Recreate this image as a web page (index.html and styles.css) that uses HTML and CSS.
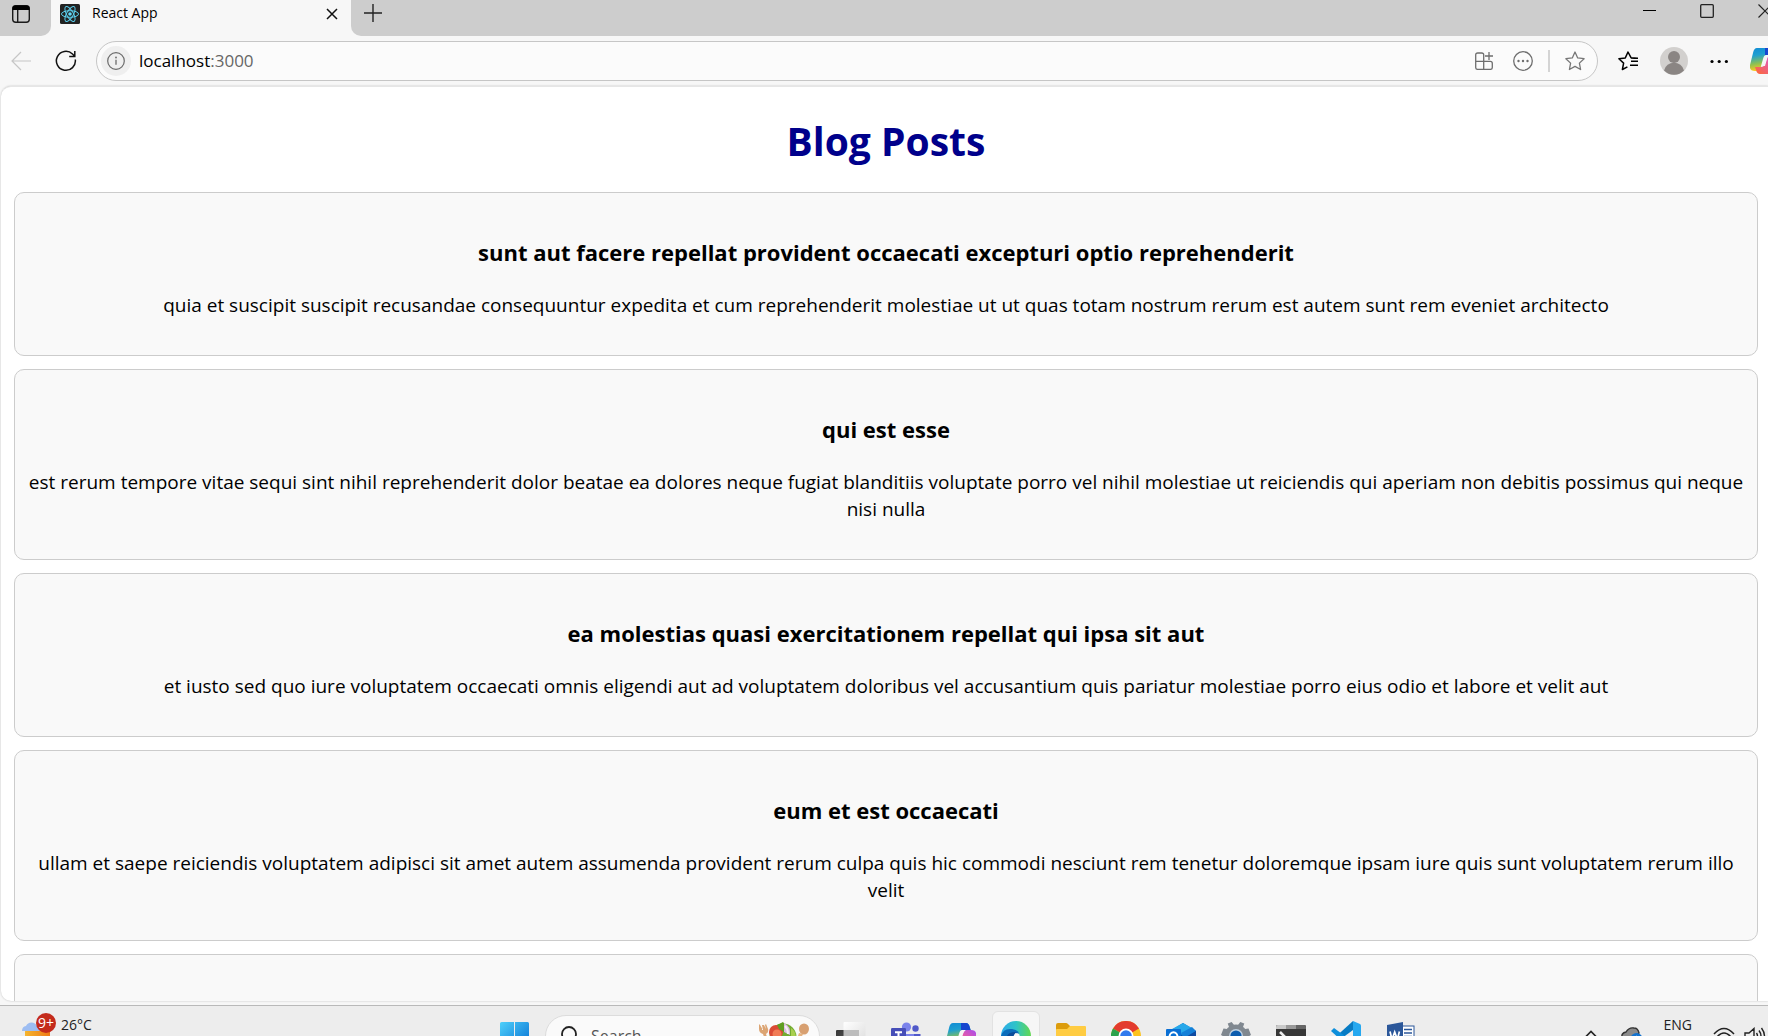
FILE: index.html
```html
<!DOCTYPE html>
<html lang="en">
<head>
<meta charset="utf-8">
<title>React App</title>
<link rel="stylesheet" href="styles.css">
</head>
<body>
<header class="tabs">
  <button class="tab-menu" aria-label="Tab actions">
    <svg width="20" height="20" viewBox="0 0 20 20"><rect x="1.7" y="1.7" width="16.6" height="16.6" rx="3" fill="none" stroke="#1b1b1b" stroke-width="1.4"/><path d="M1.5 6V4.500a3 3 0 0 1 3-3h11a3 3 0 0 1 3 3V6z"/><path d="M6.700 6v12" stroke="#1b1b1b" stroke-width="1.400"/></svg>
  </button>
  <div class="tab">
    <svg width="20" height="20" viewBox="0 0 20 20"><rect width="20" height="20" rx="1.500" fill="#222"/><g fill="none" stroke="#5ccfee" stroke-width="1"><ellipse cx="10" cy="10" rx="8.500" ry="3.300"/><ellipse cx="10" cy="10" rx="8.500" ry="3.300" transform="rotate(60 10 10)"/><ellipse cx="10" cy="10" rx="8.500" ry="3.300" transform="rotate(120 10 10)"/></g><circle cx="10" cy="10" r="1.800" fill="#61dafb"/></svg>
    <span class="tab-title">React App</span>
    <button aria-label="Close tab"><svg width="12" height="12" viewBox="0 0 12 12"><path d="M1 1l10 10M11 1L1 11" stroke="#111" stroke-width="1.500"/></svg></button>
  </div>
  <div class="tab-rest">
    <button aria-label="New tab"><svg width="18" height="18" viewBox="0 0 18 18"><path d="M9 0v18M0 9h18" stroke="#222" stroke-width="1.400"/></svg></button>
    <div class="window-buttons">
      <button aria-label="Minimize"><svg width="14" height="14" viewBox="0 0 14 14"><path d="M1 6.500h13" stroke="#000" stroke-width="1"/></svg></button>
      <button aria-label="Maximize"><svg width="14" height="14" viewBox="0 0 14 14"><rect x=".7" y=".7" width="12.600" height="12.600" rx="1" fill="none" stroke="#222" stroke-width="1.300"/></svg></button>
      <button aria-label="Close window"><svg width="14" height="14" viewBox="0 0 14 14"><path d="M.5 .5l13 13M13.500 .5l-13 13" stroke="#222" stroke-width="1.200"/></svg></button>
    </div>
  </div>
</header>

<nav class="toolbar">
  <button aria-label="Back"><svg width="20" height="20" viewBox="0 0 20 20"><path d="M20 10H1M10 1l-9 9 9 9" fill="none" stroke="#c6c6c6" stroke-width="1.200"/></svg></button>
  <button aria-label="Reload"><svg width="22" height="22" viewBox="0 0 22 22"><path d="M20.300 9.500A9.500 9.500 0 1 1 17.500 4L19.700 6.200M19.800 1v5.600h-5.600" fill="none" stroke="#111" stroke-width="1.500"/></svg></button>
  <div class="address">
    <button class="site-info" aria-label="Site information"><svg width="18" height="18" viewBox="0 0 18 18"><circle cx="9" cy="9" r="8.300" fill="none" stroke="#6b6b6b" stroke-width="1.200"/><path d="M9 7.800v5" stroke="#6b6b6b" stroke-width="1.300"/><circle cx="9" cy="5.500" r=".9" fill="#6b6b6b"/></svg></button>
    <a class="url" href="#">localhost<span>:3000</span></a>
    <button aria-label="App available"><svg width="18" height="18" viewBox="0 0 18 18"><path d="M8.700 17.400V3q0-2-2-2h-4q-2 0-2 2v12.400q0 2 2 2h12.600q2 0 2-2v-4q0-2-2-2H.7M14 0v8M10 4h8" fill="none" stroke="#6e6e6e" stroke-width="1.300"/></svg></button>
    <button aria-label="More page actions"><svg width="20" height="20" viewBox="0 0 20 20"><circle cx="10" cy="10" r="9.300" fill="none" stroke="#6e6e6e" stroke-width="1.300"/><g fill="#6e6e6e"><circle cx="5.500" cy="10" r="1.200"/><circle cx="10" cy="10" r="1.200"/><circle cx="14.500" cy="10" r="1.200"/></g></svg></button>
    <span class="divider"></span>
    <button aria-label="Add to favorites"><svg width="20" height="20" viewBox="0 0 20 20"><path d="M10 1l2.700 5.900 6.400.8-4.700 4.400 1.200 6.400L10 15.400l-5.600 3.100 1.200-6.400L.9 7.700l6.400-.8z" fill="none" stroke="#777" stroke-width="1.300" stroke-linejoin="round"/></svg></button>
  </div>
  <div class="tools">
    <button aria-label="Favorites"><svg width="20" height="20" viewBox="0 0 20 20"><path d="M19.500 7.200l-6.500-.5L10 1 7.300 6.900.9 7.700l4.700 4.400-1.200 6.400 5-2.700M13 10.200h7M12 14.200h8M13 7.200h7" fill="none" stroke="#000" stroke-width="1.500" stroke-linejoin="round"/></svg></button>
    <button aria-label="Profile"><svg width="28" height="28" viewBox="0 0 28 28"><circle cx="14" cy="14" r="14" fill="#d2d0ce"/><circle cx="14" cy="10" r="6" fill="#8a8583"/><path d="M4 23.500a10.300 10.300 0 0 1 20 0A14 14 0 0 1 4 23.500z" fill="#8a8583"/></svg></button>
    <button aria-label="Settings and more"><svg width="18" height="18" viewBox="0 0 18 18"><circle cx="2" cy="9.500" r="1.600"/><circle cx="9.200" cy="9.500" r="1.600"/><circle cx="16.400" cy="9.500" r="1.600"/></svg></button>
    <button aria-label="Copilot"><svg width="30" height="28" viewBox="0 0 30 28"><use href="#copilot"/></svg></button>
  </div>
</nav>

<main class="page">
  <h1>Blog Posts</h1>
  <article class="post"><h3>sunt aut facere repellat provident occaecati excepturi optio reprehenderit</h3><p>quia et suscipit suscipit recusandae consequuntur expedita et cum reprehenderit molestiae ut ut quas totam nostrum rerum est autem sunt rem eveniet architecto</p></article>
  <article class="post"><h3>qui est esse</h3><p>est rerum tempore vitae sequi sint nihil reprehenderit dolor beatae ea dolores neque fugiat blanditiis voluptate porro vel nihil molestiae ut reiciendis qui aperiam non debitis possimus qui neque nisi nulla</p></article>
  <article class="post"><h3>ea molestias quasi exercitationem repellat qui ipsa sit aut</h3><p>et iusto sed quo iure voluptatem occaecati omnis eligendi aut ad voluptatem doloribus vel accusantium quis pariatur molestiae porro eius odio et labore et velit aut</p></article>
  <article class="post"><h3>eum et est occaecati</h3><p>ullam et saepe reiciendis voluptatem adipisci sit amet autem assumenda provident rerum culpa quis hic commodi nesciunt rem tenetur doloremque ipsam iure quis sunt voluptatem rerum illo velit</p></article>
  <article class="post post-next"></article>
</main>

<footer class="taskbar">
  <div class="taskbar-row">
    <div class="weather">
      <div class="weather-icon">
        <svg width="30" height="30" viewBox="0 0 30 30"><defs><linearGradient id="sun" x2="1"><stop stop-color="#f5b52e"/><stop offset="1" stop-color="#ee7a16"/></linearGradient></defs><rect x="3" y="9" width="25" height="20" rx="4" fill="url(#sun)"/><path d="M0 12a5 5 0 0 1 4-5 6 6 0 0 1 11 0q4 1 4 5H0z" fill="#9dbdf2"/><path d="M14 22q2-6 6-5 5 0 6 5z" fill="#85a8e6"/></svg>
        <span class="badge">9+</span>
      </div>
      <span class="label">26°C</span>
    </div>
    <div class="apps">
      <button class="start" aria-label="Start"><svg width="30" height="30" viewBox="0 0 30 30"><defs><linearGradient id="win" gradientUnits="userSpaceOnUse" x1="0" y1="0" x2="30" y2="30"><stop stop-color="#4fd2fb"/><stop offset="1" stop-color="#0067cf"/></linearGradient></defs><path d="M1.500 1H14v14H0V2.500Q0 1 1.500 1zM15 1h12.500Q29 1 29 2.500V15H15zM0 16h14v14H0zM15 16h14v14H15z" fill="url(#win)"/></svg></button>
      <div class="search">
        <svg width="18" height="20" viewBox="0 0 18 20"><circle cx="9" cy="8" r="7" fill="none" stroke="#222" stroke-width="1.800"/><path d="M4 14l-4 5" stroke="#222" stroke-width="2"/></svg>
        <input type="search" placeholder="Search" aria-label="Search">
        <svg width="54" height="30" viewBox="0 0 54 30"><path d="M3 3v5q0 4 4 5l4 12h3l-4-12q3-2 2-5l-2-5-1 1 1 4-2-4-2 0 1 5-3-5z" fill="#dca574"/><ellipse cx="48" cy="8" rx="5" ry="5.500" fill="#d8a071"/><path d="M43 12l-5 14h3l6-13z" fill="#e4b381"/><circle cx="27" cy="16" r="13.500" fill="#73ac32"/><circle cx="20" cy="11" r="7" fill="#da4b36"/><circle cx="21" cy="13" r="4.500" fill="#f17c56"/><path d="M21 4l6-3 5 6-4 4-5-3z" fill="#5f9e22"/><path d="M28 2q7 3 6 12l-6-3z" fill="#d8bddd"/><path d="M29 5q3 3 3 8" stroke="#f6eef7" stroke-width="2" fill="none"/><path d="M35 7q5 3 5 10l-5-2z" fill="#a9cf4f"/></svg>
      </div>
      <button aria-label="Task view"><svg width="30" height="30" viewBox="0 0 30 30"><defs><linearGradient id="tv" x2="1" y2="1"><stop stop-color="#383838"/><stop offset="1" stop-color="#666"/></linearGradient><linearGradient id="tw" x2="1" y2="1"><stop stop-color="#fff"/><stop offset="1" stop-color="#dcdcdc"/></linearGradient></defs><rect x="7.500" y="1" width="22" height="22" rx="1" fill="url(#tw)"/><rect x="0" y="9" width="23" height="20" rx="1" fill="url(#tv)"/><path d="M7.500 9H23v14H7.500z" fill="#bdbdbd"/></svg></button>
      <button aria-label="Teams"><svg width="30" height="30" viewBox="0 0 30 30"><circle cx="15.500" cy="6" r="4.600" fill="#7b83eb"/><circle cx="24.500" cy="7.500" r="3.200" fill="#5059c9"/><path d="M18 13h11.500v9a6 6 0 0 1-8 3z" fill="#5059c9"/><path d="M9 13h14v10a7 7 0 0 1-14 4z" fill="#7b83eb"/><rect y="7" width="15" height="17" rx="1.200" fill="#464eb8"/><path d="M4 11.200h7M7.500 11.200v9" stroke="#fff" stroke-width="2"/></svg></button>
      <button aria-label="Copilot"><svg width="30" height="30" viewBox="0 0 30 28"><defs>
        <linearGradient id="cpa" x2=".2" y2="1"><stop stop-color="#118bd5"/><stop offset=".35" stop-color="#1e9fd0"/><stop offset=".7" stop-color="#8cc152"/><stop offset="1" stop-color="#ffc81e"/></linearGradient>
        <linearGradient id="cpb" x1="1" x2="0" y2="1"><stop stop-color="#a64cf0"/><stop offset=".4" stop-color="#e45aa9"/><stop offset="1" stop-color="#ff6a32"/></linearGradient></defs>
        <g id="copilot"><path d="M7 1h13q3 0 4 5l1 3h-7L10 21q-1 3-4 3H5q-6 0-5-6L3 6q1-5 4-5z" fill="url(#cpa)"/><path d="M15 1h5q3 0 4 5l1 3h-6q-3 0-4 3z" fill="#1746cf"/><path d="M23 27H10q-3 0-4-4l-1-3h6q3 0 4-3l2-6q1-3 4-3h4q6 0 5 6l-3 8q-1 5-4 5z" fill="url(#cpb)"/><path d="M16 8h4q-2 1-3 4l-2 7h-4l2-7q1-4 3-4z" fill="#f5f5f5"/></g></svg></button>
      <button class="active" aria-label="Edge"><svg width="30" height="30" viewBox="0 0 30 30"><defs><linearGradient id="eg" x2="1"><stop stop-color="#2da9ea"/><stop offset=".5" stop-color="#2fc4c7"/><stop offset="1" stop-color="#62d84f"/></linearGradient></defs><circle cx="15" cy="15" r="15" fill="url(#eg)"/><path d="M0 15q2-8 11-7 7 1 7 5-4 0-4 5c0 5 6 8 12 6A15 15 0 0 1 0 15z" fill="#0b6dbb"/><path d="M5 20q0-9 9-9l2 1q-4 3-2 9 2 5 10 5-10 7-17-1z" fill="#0a4c99"/><path d="M14.500 12q5 0 4 4-1 2 1 4-6 0-7-4 0-2 2-4z" fill="#f5f5f5"/></svg></button>
      <button aria-label="File Explorer"><svg width="30" height="30" viewBox="0 0 30 30"><path d="M0 4q0-2 2-2h8q1 0 2 1l2 2h14v6H0z" fill="#dc9c0c"/><path d="M0 9q0-1 1-1h10l3-3h15q1 0 1 1v20q0 2-2 2H2q-2 0-2-2z" fill="#ffcc42"/></svg></button>
      <button aria-label="Chrome"><svg width="30" height="30" viewBox="0 0 30 30"><circle cx="15" cy="15" r="15" fill="#fcc31e"/><path d="M15 15L2 7.500a15 15 0 0 1 26 0z" fill="#e33b2e"/><path d="M15 15L2 7.500A15 15 0 0 0 15 30l6.500-11z" fill="#2ba24c"/><circle cx="15" cy="15" r="7.500" fill="#fff"/><circle cx="15" cy="15" r="5.800" fill="#3079ed"/></svg></button>
      <button aria-label="Outlook"><svg width="30" height="30" viewBox="0 0 30 30"><path d="M4 10L17 2l13 8v17H4z" fill="#0a59ac"/><path d="M6 8l11-6 9 5-13 8z" fill="#28a8ea"/><path d="M15 12l11-6 4 4-12 8z" fill="#1480d8"/><path d="M18 17l12-7v17H10z" fill="#0f4aa1"/><rect y="8" width="15" height="16" rx="1" fill="#0a6fd4"/><ellipse cx="7.500" cy="16" rx="4" ry="4.700" fill="none" stroke="#fff" stroke-width="2"/></svg></button>
      <button aria-label="Settings"><svg width="30" height="30" viewBox="0 0 30 30"><g fill="#808890"><circle cx="15" cy="15" r="11.500"/><path d="M8 6L6.700 2.600l4-1.600L13 4h4l2.300-3 4 1.600L22 6zM8 24l-1.300 3.400 4 1.600 2.300-3h4l2.300 3 4-1.600L22 24z"/><path d="M6 8l-3.500-.5L0 14l3.500 2L6 23h18l2.500-7 3.500-2-2.500-6.500L24 8z"/></g><circle cx="15" cy="15" r="7" fill="#c0d2e2"/><circle cx="15" cy="15" r="5.600" fill="#0c5cae"/></svg></button>
      <button aria-label="Terminal"><svg width="30" height="30" viewBox="0 0 30 30"><rect y="4" width="30" height="24" rx="1.500" fill="#383838"/><path d="M0 8V5.500Q0 4 1.500 4H10v4z" fill="#c9c9c9"/><path d="M10 4h10v4H10z" fill="#999"/><path d="M20 4h8.500Q30 4 30 5.500V8H20z" fill="#666"/><path d="M4 11l6 6-6 6" stroke="#eee" stroke-width="2.600" fill="none"/></svg></button>
      <button aria-label="Visual Studio Code"><svg width="30" height="30" viewBox="0 0 30 30"><path d="M22 0l7 3q1 .5 1 2v20q0 1.500-1 2l-7 3z" fill="#25a8f0"/><path d="M22 0v9L3 23 0 20z" fill="#087cc4"/><path d="M0 10l3-3 19 14v9z" fill="#0e8fdb"/></svg></button>
      <button aria-label="Word"><svg width="30" height="30" viewBox="0 0 30 30"><rect x="15" y="5" width="13" height="21" fill="#fff" stroke="#2b579a"/><path d="M18 8.500h8M18 12h8M18 15.500h8M18 19h8" stroke="#2b579a" stroke-width="1.600"/><path d="M1 4l16-3v28L1 26z" fill="#2b579a"/><path d="M4 10.500l2 8 2.700-7.500 2.700 7.500 2-8" stroke="#fff" stroke-width="1.700" fill="none"/></svg></button>
    </div>
    <div class="tray">
      <button aria-label="Show hidden icons"><svg width="14" height="10" viewBox="0 0 14 10"><path d="M1 7.500l6-6 6 6" fill="none" stroke="#222" stroke-width="1.600"/></svg></button>
      <button aria-label="OneDrive"><svg width="22" height="18" viewBox="0 0 22 18"><path d="M1 11q-1-5 4-6Q8 0 13 1q4 0 5 5l-8 8H4q-3 0-3-3z" fill="#8b8b8b" stroke="#333" stroke-width="1.400"/><circle cx="15.500" cy="12" r="6" fill="#1473cf"/><path d="M12.500 11a3.500 3.500 0 0 1 6 0" fill="none" stroke="#fff"/></svg></button>
      <button class="label language">ENG</button>
      <button aria-label="Wi-Fi"><svg width="22" height="18" viewBox="0 0 22 18"><g fill="none" stroke="#222" stroke-width="1.500"><path d="M1 7q10-11 20 0M4 10q7-8 14 0M7.500 13q3.500-4.500 7 0"/></g><circle cx="11" cy="15.500" r="1.600"/></svg></button>
      <button aria-label="Volume"><svg width="22" height="18" viewBox="0 0 22 18"><g fill="none" stroke="#222" stroke-width="1.400"><path d="M1 6h4l5-4.500v15L5 12H1zM12.500 6q2 3 0 6M15 3.500q4 5.500 0 11M17.500 1q6 8 0 16"/></g></svg></button>
    </div>
  </div>
</footer>
</body>
</html>
```
FILE: styles.css
```css
* { box-sizing: border-box; }

body {
  margin: 0;
  height: 100vh;
  display: flex;
  flex-direction: column;
  overflow: hidden;
  background: #f7f7f7;
  color: #000;
  font-family: "Open Sans", "Noto Sans", sans-serif;
}

button {
  display: flex;
  flex: none;
  align-items: center;
  justify-content: center;
  margin: 0;
  padding: 0;
  border: 0;
  background: none;
  color: inherit;
  font: inherit;
}

svg { display: block; flex: none; }

/* Tab strip */
.tabs {
  display: flex;
  flex: none;
  height: 36px;
}

.tab-menu {
  width: 51px;
  padding: 0 9px 8px 0;
  background: #cdcdcd;
  border-bottom-right-radius: 10px;
}

.tab {
  display: flex;
  align-items: center;
  width: 300px;
  padding: 0 13px 8px 9px;
  font-size: 14px;
  line-height: 18px;
}

.tab-title {
  flex: 1;
  margin-left: 12px;
  padding-bottom: 2px;
}

.tab-rest {
  display: flex;
  flex: 1;
  justify-content: space-between;
  align-items: flex-start;
  padding: 4px 0 0 13px;
  background: #cdcdcd;
  border-bottom-left-radius: 10px;
  overflow: hidden;
}

.window-buttons {
  display: flex;
  gap: 44px;
  margin-right: -4px;
}

/* Toolbar */
.toolbar {
  display: flex;
  flex: none;
  align-items: center;
  height: 50px;
  padding-left: 11px;
  gap: 24px;
}

.address {
  display: flex;
  flex: 1;
  align-items: center;
  gap: 20px;
  height: 40px;
  margin-left: -5px;
  padding: 0 12px 0 4px;
  border: 1px solid #c6c6c6;
  border-radius: 20px;
  background: #fbfbfb;
}

.site-info {
  width: 30px;
  height: 30px;
  border-radius: 50%;
  background: #efefef;
}

.url {
  flex: 1;
  margin-left: -12px;
  padding-bottom: 2px;
  color: #000;
  font-size: 17px;
  text-decoration: none;
}

.url span { color: #666; }

.divider {
  width: 2px;
  height: 22px;
  margin: 0 -5px;
  background: #d4d4d4;
}

.tools {
  display: flex;
  align-items: center;
  gap: 22px;
  margin: 0 -12px 0 -4px;
}

/* Web page */
.page {
  flex: 1;
  min-height: 0;
  margin-left: 1px;
  padding: 0 10px 0 13px;
  overflow: hidden;
  border: 0 solid #e6e6e6;
  border-top-width: 1px;
  border-radius: 10px 0 0 10px;
  background: #fff;
  box-shadow: 0 0 2px #bbb;
  text-align: center;
}

h1 {
  margin: 27px 0 25px;
  color: #00008b;
  font-size: 39px;
  line-height: 53px;
}

.post {
  margin-bottom: 13px;
  padding: 21px 10px 16px;
  border: 1px solid #ccc;
  border-radius: 10px;
  background: #f9f9f9;
}

.post h3 {
  margin: 23px 0 24px;
  font-size: 22px;
  line-height: 31px;
}

.post p {
  margin: 20px 0;
  font-size: 19px;
  line-height: 27px;
}

.post-next { height: 164px; }

/* Taskbar */
.taskbar {
  flex: none;
  height: 31px;
  margin-top: 4px;
  overflow: hidden;
  border-top: 1px solid #b9b9b9;
  background: #ededed;
}

.taskbar-row {
  display: grid;
  grid-template-columns: 500fr auto 352fr;
  height: 60px;
}

.weather {
  display: flex;
  align-items: flex-start;
  gap: 9px;
  padding: 9px 0 0 22px;
}

.weather-icon {
  position: relative;
  padding-top: 4px;
}

.badge {
  position: absolute;
  top: -2px;
  left: 14px;
  width: 20px;
  height: 20px;
  border-radius: 50%;
  background: #c42b1c;
  color: #fff;
  font-size: 14px;
  line-height: 20px;
  text-align: center;
}

.label {
  color: #222;
  font-size: 14px;
  line-height: 20px;
}

.apps {
  display: flex;
  align-items: center;
  gap: 25px;
}

.apps .start { margin-right: -10px; }

.search {
  display: flex;
  align-items: center;
  width: 275px;
  height: 42px;
  margin-right: -9px;
  padding: 0 9px 0 14px;
  gap: 13px;
  border: 1px solid #dcdcdc;
  border-radius: 21px;
  background: #fafafa;
}

.search input {
  flex: 1;
  min-width: 0;
  padding: 0;
  border: 0;
  background: none;
  font: 16px "Open Sans", "Noto Sans", sans-serif;
}

.search input::placeholder { color: #555; }

.apps .active {
  width: 48px;
  height: 50px;
  margin: 0 -9px;
  border: 1px solid #e2e2e2;
  border-radius: 6px;
  background: #f6f6f6;
}

.tray {
  display: flex;
  align-items: flex-start;
  justify-content: flex-end;
  gap: 9px;
  padding: 21px 2px 0 0;
}

.tray button:first-child { margin: 3px 14px 0 0; }

.tray .language {
  margin: -12px 12px 0;
}
```
